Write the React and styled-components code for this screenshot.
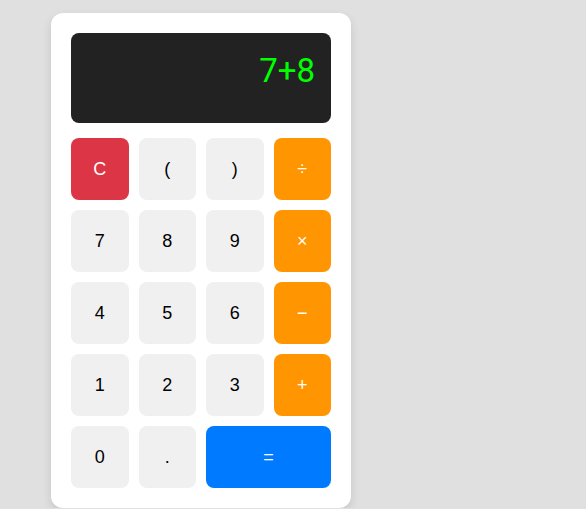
import styled, { createGlobalStyle } from 'styled-components';

const GlobalStyle = createGlobalStyle`
    body {
        margin: 0;
        background: #e0e0e0;
        font-family: "Liberation Sans", Arial, sans-serif;
    }
`;

const keys = [
    { label: 'C', kind: 'clear' },
    { label: '(' },
    { label: ')' },
    { label: '÷', kind: 'op' },
    { label: '7' },
    { label: '8' },
    { label: '9' },
    { label: '×', kind: 'op' },
    { label: '4' },
    { label: '5' },
    { label: '6' },
    { label: '−', kind: 'op' },
    { label: '1' },
    { label: '2' },
    { label: '3' },
    { label: '+', kind: 'op' },
    { label: '0' },
    { label: '.' },
    { label: '=', kind: 'equals', span: 2 },
];

const App = () => {
    return (
        <>
            <GlobalStyle />
            <Page>
                <Calculator>
                    <Display>7+8</Display>
                    <Keypad>
                        {keys.map((k) => (
                            <Key key={k.label} $kind={k.kind} $span={k.span}>
                                {k.label}
                            </Key>
                        ))}
                    </Keypad>
                </Calculator>
            </Page>
        </>
    );
};

const Page = styled.div`
    padding: 13px 0 0 51px;
`;

const Calculator = styled.div`
    width: 260px;
    padding: 20px;
    background: #fff;
    border-radius: 12px;
    box-shadow: 0 4px 10px rgba(0, 0, 0, 0.12);
`;

const Display = styled.div`
    height: 90px;
    box-sizing: border-box;
    background: #222;
    color: #00ff00;
    border-radius: 8px;
    padding: 18px 16px 0;
    margin-bottom: 15px;
    text-align: right;
    font-family: Roboto, "Liberation Sans", sans-serif;
    font-size: 33px;
`;

const Keypad = styled.div`
    display: grid;
    grid-template-columns: repeat(4, 1fr);
    gap: 10px;
`;

const bg = {
    clear: '#dc3545',
    op: '#ff9500',
    equals: '#007bff',
};

const Key = styled.button`
    grid-column: span ${(p) => p.$span || 1};
    height: 62px;
    border: none;
    border-radius: 8px;
    background: ${(p) => bg[p.$kind] || '#f0f0f0'};
    color: ${(p) => (p.$kind ? '#fff' : '#000')};
    font-family: "Liberation Sans", Arial, sans-serif;
    font-size: 18px;
    cursor: pointer;
`;

export default App;
